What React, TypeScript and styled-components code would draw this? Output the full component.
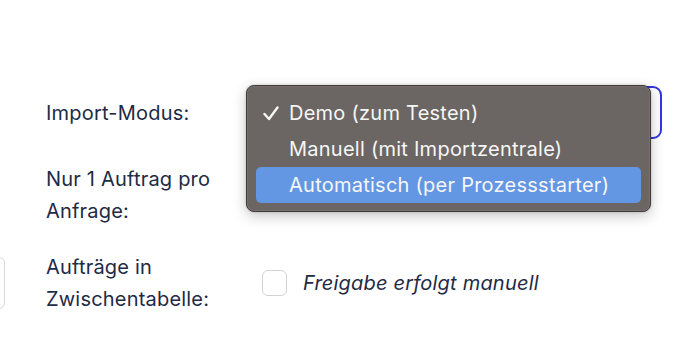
import React from "react";
import styled, { createGlobalStyle } from "styled-components";

const Global = createGlobalStyle`
  html, body { margin: 0; padding: 0; background: #ffffff; }
  body { font-family: Inter, "Noto Sans", sans-serif; overflow: hidden; }
`;

const Page = styled.div`
  width: 690px;
  height: 339px;
  box-sizing: border-box;
  padding-top: 86px;
  overflow: hidden;
  position: relative;
`;

const Form = styled.div`
  display: grid;
  grid-template-columns: 46px 204px 412px;
  row-gap: 24px;
  align-items: center;
`;

const Stub = styled.div`
  justify-self: start;
  width: 20px;
  height: 52px;
  margin-left: -15px;
  box-sizing: border-box;
  border: 1.5px solid #d9d9d9;
  border-radius: 6px;
`;

const Empty = styled.div``;

const Label = styled.div`
  font-size: 20px;
  line-height: 32px;
  color: #1e2b45;
  letter-spacing: 0.2px;
  align-self: center;
`;

const SelectWrap = styled.div`
  position: relative;
  height: 53px;
`;

const SelectBox = styled.div`
  height: 53px;
  box-sizing: border-box;
  border: 2px solid #3236e0;
  border-radius: 9px;
  background: #fff;
`;

const Menu = styled.div`
  position: absolute;
  left: -4px;
  top: -1px;
  width: 405px;
  box-sizing: border-box;
  padding: 9px 9px 8px 9px;
  background: #6b6663;
  border: 1px solid #3f3b39;
  border-radius: 8px;
  box-shadow: 0 0 0 0.5px rgba(255,255,255,0.15) inset, 0 4px 14px rgba(0,0,0,0.22), 0 0 3px rgba(0,0,0,0.18);
  z-index: 5;
`;

const Item = styled.div<{ $active?: boolean }>`
  position: relative;
  height: 36px;
  display: flex;
  align-items: center;
  padding-left: 33px;
  border-radius: 5px;
  background: ${(p) => (p.$active ? "#6497e3" : "transparent")};
  color: #f6f6f6;
  font-size: 20px;
  letter-spacing: 0.25px;
`;

const Check = styled.svg`
  position: absolute;
  left: 7px;
  top: 11px;
`;

const CheckRow = styled.div`
  display: flex;
  align-items: center;
  gap: 16px;
  padding-left: 12px;
`;

const Box = styled.div`
  width: 25px;
  height: 26px;
  box-sizing: border-box;
  border: 1.5px solid #d3d3d3;
  border-radius: 6px;
  background: #fff;
`;

const Italic = styled.span`
  font-style: italic;
  font-size: 20px;
  letter-spacing: 0.2px;
  color: #1e2b45;
`;

export default function App() {
  return (
    <Page>
      <Global />
      <Form>
        <Empty />
        <Label>Import-Modus:</Label>
        <SelectWrap>
          <SelectBox />
          <Menu>
            <Item>
              <Check width="16" height="15" viewBox="0 0 16 15">
                <path d="M1.5 8 L6 13 L14.5 1.5" fill="none" stroke="#f6f6f6" strokeWidth="2.4" strokeLinecap="round" strokeLinejoin="round" />
              </Check>
              Demo (zum Testen)
            </Item>
            <Item>Manuell (mit Importzentrale)</Item>
            <Item $active>Automatisch (per Prozessstarter)</Item>
          </Menu>
        </SelectWrap>

        <Empty />
        <Label>
          Nur 1 Auftrag pro
          <br />
          Anfrage:
        </Label>
        <Empty />

        <Stub />
        <Label>
          Aufträge in
          <br />
          Zwischentabelle:
        </Label>
        <CheckRow>
          <Box />
          <Italic>Freigabe erfolgt manuell</Italic>
        </CheckRow>
      </Form>
    </Page>
  );
}
